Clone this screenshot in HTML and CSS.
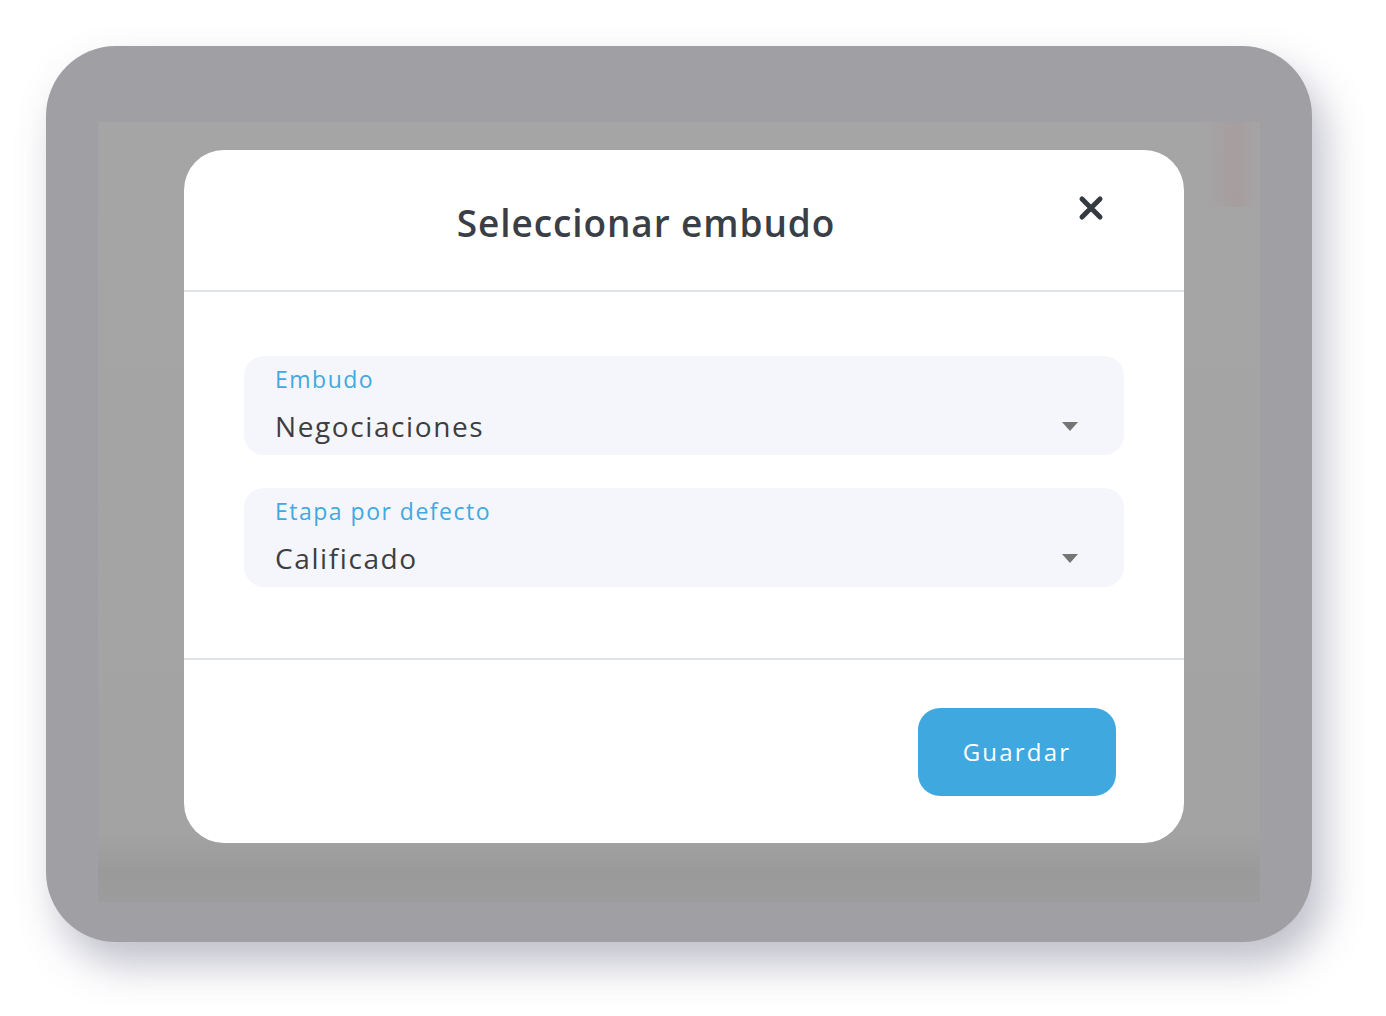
FILE: index.html
```html
<!DOCTYPE html>
<html lang="es">
<head>
    <meta charset="UTF-8">
    <meta name="viewport" content="width=device-width, initial-scale=1.0">
    <title>Seleccionar embudo</title>
    <link rel="stylesheet" href="styles.css">
</head>
<body>
    <div class="page">
        <div class="frame">
            <div class="backdrop">
                <div class="modal">
                    <div class="modal-header">
                        <h2>Seleccionar embudo</h2>
                        <button type="button" class="close" aria-label="Cerrar">
                            <svg width="26" height="26" viewBox="0 0 26 26">
                                <path d="M4 4 L22 22 M22 4 L4 22" stroke="#343a40" stroke-width="5" stroke-linecap="round"/>
                            </svg>
                        </button>
                    </div>

                    <div class="modal-body">
                        <div class="field">
                            <label>Embudo</label>
                            <div class="value">Negociaciones</div>
                            <span class="caret"></span>
                        </div>
                        <div class="field">
                            <label>Etapa por defecto</label>
                            <div class="value">Calificado</div>
                            <span class="caret"></span>
                        </div>
                    </div>

                    <div class="modal-footer">
                        <button type="button" class="save">Guardar</button>
                    </div>
                </div>
            </div>
        </div>
    </div>
</body>
</html>
```

FILE: styles.css
```css
html, body {
    margin: 0;
    padding: 0;
    background-color: #ffffff;
}

body {
    font-family: "Open Sans", "Noto Sans", sans-serif;
}

.page {
    height: 1016px;
    padding: 46px 0 0 46px;
    box-sizing: border-box;
}

.frame {
    width: 1266px;
    height: 896px;
    box-sizing: border-box;
    padding: 76px 52px 40px 52px;
    background: #a09fa3;
    border-radius: 70px;
    box-shadow: 12px 22px 40px rgba(70, 72, 100, 0.35);
}

.backdrop {
    height: 100%;
    box-sizing: border-box;
    padding: 28px 76px 59px 86px;
    background:
        linear-gradient(90deg, rgba(0, 0, 0, 0) 95%, rgba(170, 140, 145, 0.3) 98%, rgba(0, 0, 0, 0) 100%) top / 100% 85px no-repeat,
        linear-gradient(180deg, #a5a5a5 0%, #a3a3a3 91%, #9a9a9a 96%, #9c9c9c 100%);
}

.modal {
    background: #ffffff;
    border-radius: 40px;
    height: 693px;
    display: flex;
    flex-direction: column;
}

.modal-header {
    height: 140px;
    border-bottom: 2px solid #dee2e6;
    display: flex;
    align-items: center;
    padding: 0 80px 0 60px;
}

.modal-header h2 {
    flex: 1;
    margin: 4px 0 0 0;
    text-align: center;
    font-size: 37px;
    font-weight: 600;
    letter-spacing: 0.9px;
    color: #3a3f47;
}

.close {
    align-self: flex-start;
    margin: 45px 0 0 30px;
    border: none;
    background: none;
    padding: 0;
    width: 26px;
    height: 26px;
    cursor: pointer;
}

.modal-body {
    height: 368px;
    border-bottom: 2px solid #dee2e6;
    padding: 64px 60px 0 60px;
    box-sizing: border-box;
    display: flex;
    flex-direction: column;
    gap: 33px;
}

.field {
    position: relative;
    background: #f5f6fb;
    border-radius: 20px;
    height: 99px;
    padding: 8px 31px 0 31px;
    box-sizing: border-box;
}

.field label {
    display: block;
    font-size: 23px;
    letter-spacing: 1.5px;
    color: #3fa9e1;
    line-height: 30px;
}

.field .value {
    font-size: 28px;
    letter-spacing: 1.6px;
    color: #3d3e40;
    line-height: 40px;
    margin-top: 12px;
}

.caret {
    position: absolute;
    right: 46px;
    top: 66px;
    width: 0;
    height: 0;
    border-left: 8px solid transparent;
    border-right: 8px solid transparent;
    border-top: 9px solid #757575;
}

.modal-footer {
    flex: 1;
    display: flex;
    justify-content: flex-end;
    align-items: flex-start;
    padding: 48px 68px 0 0;
}

.save {
    width: 198px;
    height: 88px;
    border: none;
    border-radius: 22px;
    background-color: #3ea8df;
    color: #ffffff;
    font-family: "Open Sans", "Noto Sans", sans-serif;
    font-size: 24px;
    letter-spacing: 2.2px;
    padding-bottom: 3px;
    cursor: pointer;
}
```
